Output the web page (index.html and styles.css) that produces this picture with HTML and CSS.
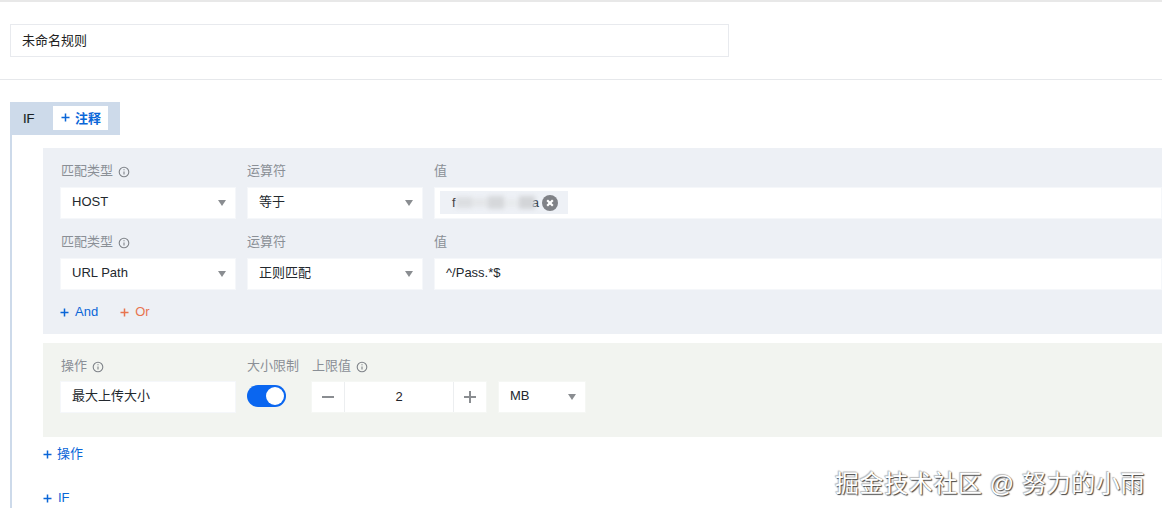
FILE: index.html
```html
<!DOCTYPE html>
<html lang="zh">
<head>
<meta charset="utf-8">
<title>规则</title>
<link rel="stylesheet" href="styles.css">
</head>
<body>
<div class="name-section">
  <div class="name-input">未命名规则</div>
</div>
<div class="rule">
  <div class="if-head">
    <span class="if-text">IF</span>
    <button class="note-btn"><svg class="plus" viewBox="0 0 9 9"><path d="M4.5 0.5v8M0.5 4.5h8"/></svg>注释</button>
  </div>
  <div class="if-body">
    <div class="cond-block">
      <div class="row">
        <div class="col col-type">
          <div class="label">匹配类型<svg class="info" viewBox="0 0 12 12"><circle cx="6" cy="6" r="4.8"/><path d="M6 5.4v3.2M6 3.2v1.1"/></svg></div>
          <div class="select">HOST<i class="caret"></i></div>
        </div>
        <div class="col col-op">
          <div class="label">运算符</div>
          <div class="select">等于<i class="caret"></i></div>
        </div>
        <div class="col col-val">
          <div class="label">值</div>
          <div class="value value-tag">
            <span class="tag">
              <span class="tag-text">f<span class="redact"><i></i><i></i><i></i><i></i><i></i></span>a</span>
              <svg class="tag-x" viewBox="0 0 16 16"><circle cx="8" cy="8" r="8"/><path d="M5.2 5.2l5.6 5.6M10.8 5.2l-5.6 5.6"/></svg>
            </span>
          </div>
        </div>
      </div>
      <div class="row">
        <div class="col col-type">
          <div class="label">匹配类型<svg class="info" viewBox="0 0 12 12"><circle cx="6" cy="6" r="4.8"/><path d="M6 5.4v3.2M6 3.2v1.1"/></svg></div>
          <div class="select">URL Path<i class="caret"></i></div>
        </div>
        <div class="col col-op">
          <div class="label">运算符</div>
          <div class="select">正则匹配<i class="caret"></i></div>
        </div>
        <div class="col col-val">
          <div class="label">值</div>
          <div class="value">^/Pass.*$</div>
        </div>
      </div>
      <div class="logic">
        <a class="link"><svg class="plus" viewBox="0 0 9 9"><path d="M4.5 0.5v8M0.5 4.5h8"/></svg>And</a>
        <a class="link link-or"><svg class="plus" viewBox="0 0 9 9"><path d="M4.5 0.5v8M0.5 4.5h8"/></svg>Or</a>
      </div>
    </div>
    <div class="action-block">
      <div class="row">
        <div class="col col-type">
          <div class="label">操作<svg class="info" viewBox="0 0 12 12"><circle cx="6" cy="6" r="4.8"/><path d="M6 5.4v3.2M6 3.2v1.1"/></svg></div>
          <div class="select">最大上传大小</div>
        </div>
        <div class="col col-switch">
          <div class="label">大小限制</div>
          <div class="switch"><i class="knob"></i></div>
        </div>
        <div class="col col-limit">
          <div class="label label-limit">上限值<svg class="info" viewBox="0 0 12 12"><circle cx="6" cy="6" r="4.8"/><path d="M6 5.4v3.2M6 3.2v1.1"/></svg></div>
          <div class="limit-controls">
            <div class="stepper">
              <span class="step"><svg viewBox="0 0 12 12"><path d="M0 6h12"/></svg></span>
              <span class="step-val">2</span>
              <span class="step step-plus"><svg viewBox="0 0 12 12"><path d="M0 6h12M6 0v12"/></svg></span>
            </div>
            <div class="select select-unit">MB<i class="caret"></i></div>
          </div>
        </div>
      </div>
    </div>
    <a class="link link-action"><svg class="plus" viewBox="0 0 9 9"><path d="M4.5 0.5v8M0.5 4.5h8"/></svg>操作</a>
    <a class="link link-if"><svg class="plus" viewBox="0 0 9 9"><path d="M4.5 0.5v8M0.5 4.5h8"/></svg>IF</a>
  </div>
</div>
<div class="watermark">掘金技术社区 @ 努力的小雨</div>
</body>
</html>
```
FILE: styles.css
```css
* { box-sizing: border-box; }
html, body { margin: 0; height: 515px; overflow: hidden; background: #fff; }
body {
  position: relative;
  width: 1162px;
  font-family: "Liberation Sans", "Noto Sans CJK SC", sans-serif;
  font-size: 13px;
  color: #1f2329;
}
.name-section {
  border-top: 2px solid #e8e8e8;
  border-bottom: 1px solid #e6e8eb;
  height: 80px;
  padding: 22px 0 0 10px;
}
.name-input {
  width: 719px;
  height: 33px;
  line-height: 31px;
  padding-left: 11px;
  border: 1px solid #e8eaee;
  color: #222;
}
.rule { padding: 22px 0 0 10px; width: 1162px; }
.if-head {
  width: 110px;
  height: 33px;
  background: #cddaea;
  display: flex;
  align-items: center;
  padding-left: 13px;
}
.if-text { width: 30px; font-size: 13px; font-weight: 500; color: #1b1f24; -webkit-text-stroke: 0.2px #1b1f24; }
.note-btn {
  width: 55px;
  height: 24px;
  padding: 0 0 2px 8px;
  margin-top: -1px;
  border: 0;
  background: #fff;
  display: flex;
  align-items: center;
  color: #0a66d8;
  font: 600 13px "Liberation Sans", "Noto Sans CJK SC", sans-serif;
}
.note-btn .plus { margin-right: 5px; }
.plus {
  width: 9px;
  height: 9px;
  margin-right: 6px;
  fill: none;
  stroke: currentColor;
  stroke-width: 1.5;
  flex: none;
}
.if-body {
  border-left: 2px solid #cddaea;
  padding: 13px 0 0 31px;
  height: 373px;
}
.cond-block {
  width: 1119px;
  height: 186px;
  background: #edf0f5;
  padding: 14px 0 0 17px;
}
.action-block {
  width: 1119px;
  height: 94px;
  margin-top: 9px;
  background: #f2f4f0;
  padding: 14px 0 0 17px;
}
.row { display: flex; height: 71px; }
.logic { margin-top: -1px; }
.col { flex: none; }
.col-type { width: 176px; margin-right: 11px; }
.col-op { width: 176px; margin-right: 11px; }
.col-val { flex: 1; min-width: 0; }
.col-switch { width: 64px; }
.col-limit { width: 300px; }
.label {
  height: 25px;
  line-height: 18px;
  padding-left: 1px;
  color: #8a8f96;
  font-size: 13px;
  display: flex;
  align-items: flex-start;
}
.action-block .label { height: 24px; }
.col-op .label, .col-val .label, .col-switch .label { padding-left: 0; }
.info {
  width: 12px;
  height: 12px;
  margin: 4px 0 0 5px;
  fill: none;
  stroke: #7f8389;
  stroke-width: 1.1;
}
.select, .value {
  position: relative;
  height: 32px;
  line-height: 27px;
  background: #fff;
  padding-left: 11px;
  color: #23282e;
  border: 1px solid #f5f7fa;
}
.value-tag { padding: 3px 0 0 5px; }
.caret {
  position: absolute;
  right: 9px;
  top: 12px;
  width: 0;
  height: 0;
  border-left: 4.5px solid transparent;
  border-right: 4.5px solid transparent;
  border-top: 6px solid #8a8d91;
}
.tag {
  display: flex;
  align-items: center;
  width: 128px;
  height: 23px;
  padding-left: 12px;
  background: #eef1f6;
  line-height: 23px;
}
.tag-text { position: relative; width: 87px; margin-right: 3px; display: flex; justify-content: space-between; }
.redact {
  display: flex;
  align-items: center;
  filter: blur(2px);
  margin: 0 -4px 0 0;
  width: 79px;
}
.redact i { display: block; flex: 1; background: #dcdee1; height: 11px; }
.redact i:nth-child(2) { background: #e4e6e9; height: 9px; }
.redact i:nth-child(3) { background: #d6d8db; height: 13px; }
.redact i:nth-child(4) { background: #e8eaed; height: 8px; }
.redact i:nth-child(5) { background: #d3d5d8; height: 13px; }
.tag-x { width: 16px; height: 16px; flex: none; }
.tag-x circle { fill: #808287; }
.tag-x path { stroke: #fff; stroke-width: 2.2; fill: none; }
.logic { display: flex; gap: 22px; height: 18px; line-height: 18px; }
.link { display: flex; align-items: center; color: #0a66d8; font-size: 13px; line-height: 18px; height: 18px; }
.link-or { color: #e8744f; }
.link-action { margin-top: 8px; }
.link-action .plus { margin-right: 5px; }
.link-if { margin-top: 26px; }
.switch {
  position: relative;
  width: 39px;
  height: 22px;
  margin-top: 4px;
  border-radius: 11px;
  background: #0a66f0;
}
.knob {
  position: absolute;
  right: 2px;
  top: 2px;
  width: 18px;
  height: 18px;
  border-radius: 50%;
  background: #fff;
}
.limit-controls { display: flex; }
.stepper {
  display: flex;
  height: 32px;
  width: 176px;
  background: #fff;
  border: 1px solid #f5f7f4;
  margin-right: 11px;
}
.step {
  width: 33px;
  display: flex;
  align-items: center;
  justify-content: center;
  border-right: 1px solid #eceef0;
}
.step-plus { border-right: 0; border-left: 1px solid #eceef0; }
.step svg { width: 12px; height: 12px; fill: none; stroke: #8a8d91; stroke-width: 2; }
.step-val { flex: 1; text-align: center; line-height: 29px; }
.select-unit { width: 88px; border-color: #f5f7f4; }
.watermark {
  position: absolute;
  left: 835px;
  top: 470px;
  font-size: 24px;
  line-height: 28px;
  letter-spacing: 0.6px;
  white-space: nowrap;
  color: #fff;
  text-shadow: 1px 1px 1px #444, -1px -1px 1px #bbb, 0 0 1px #666;
}
```
